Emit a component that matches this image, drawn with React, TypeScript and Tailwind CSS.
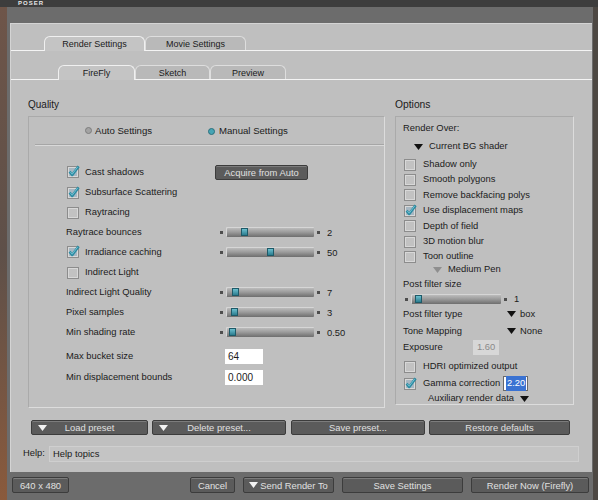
import React from 'react'

function Check({ on }: { on?: boolean }) {
  return (
    <svg width="12" height="12" viewBox="0 0 12 12" className="shrink-0 overflow-visible">
      <rect x="0.5" y="0.5" width="11" height="11" fill={on ? '#a7b7c2' : '#c2c2c2'} stroke="#8c8c8c" />
      <rect x="1.5" y="1.5" width="9" height="9" fill="none" stroke="#d8d8d8" />
      {on && (
        <>
          <path d="M2.6 5.6 L5.2 9 L11.6 0.4" fill="none" stroke="#2c8ba2" strokeWidth="2.6" strokeLinejoin="round" />
          <path d="M3.2 5.8 L5.2 8.2 L10.8 0.8" fill="none" stroke="#8fd6e4" strokeWidth="0.7" />
        </>
      )}
    </svg>
  )
}

function Radio({ on }: { on?: boolean }) {
  return (
    <span
      className={
        on
          ? 'h-[7px] w-[7px] shrink-0 rounded-full border border-[#2b6f7c] bg-[#46a5b5]'
          : 'h-[7px] w-[7px] shrink-0 rounded-full border border-[#7c7c7c] bg-[#a3a3a3]'
      }
    />
  )
}

function Tri({ grey, white }: { grey?: boolean; white?: boolean }) {
  return (
    <svg width="9" height="6" viewBox="0 0 9 6" className="shrink-0">
      <path d="M0 0 H9 L4.5 6 Z" fill={white ? '#f2f2f2' : grey ? '#8e8e8e' : '#111111'} />
    </svg>
  )
}

function Slider({ track, pos, value }: { track: string; pos: number; value?: string }) {
  return (
    <div className="flex items-center">
      <span className="h-[3px] w-[3px] bg-[#4d4d4d]" />
      <div
        className={`relative ml-[3px] h-[10px] rounded-[1px] bg-linear-to-b from-[#c4c4c4] via-[#9c9c9c] to-[#6e6e6e] shadow-[inset_1px_1px_0_#d6d6d6] ${track}`}
      >
        <span
          className="absolute top-[1px] h-[8px] w-[7px] border border-[#1e5a68] bg-linear-to-b from-[#6cc0cf] to-[#2a7d8f]"
          style={{ left: pos }}
        />
      </div>
      <span className="ml-[3px] h-[3px] w-[3px] bg-[#4d4d4d]" />
      {value && <span className="ml-[7px] pt-px">{value}</span>}
    </div>
  )
}

function Tab({ label, active, cls }: { label: string; active?: boolean; cls: string }) {
  return (
    <div
      className={
        active
          ? `relative z-10 -mb-px flex items-center justify-center rounded-t-[6px] border border-b-0 border-[#f0f0f0] bg-[#c4c4c4] pt-[2px] ${cls}`
          : `flex items-center justify-center rounded-t-[6px] border border-b-0 border-[#dedede] bg-[#b9b9b9] pt-[2px] ${cls}`
      }
    >
      {label}
    </div>
  )
}

function DarkButton({ children, cls }: { children: React.ReactNode; cls: string }) {
  return (
    <div
      className={`flex items-center justify-center rounded-[2px] border border-[#3c3c3c] bg-[#5b5b5b] pt-[2px] text-[#e0e0e0] shadow-[inset_0_1px_0_#7c7c7c] ${cls}`}
    >
      {children}
    </div>
  )
}

function Row({ children, h = 'h-[20px]' }: { children: React.ReactNode; h?: string }) {
  return <div className={`flex items-center pl-[37px] pt-px ${h}`}>{children}</div>
}

export default function App() {
  return (
    <div className="flex h-[500px] w-[598px] flex-col overflow-hidden bg-[#4d4843] font-['Liberation_Sans',Arial,sans-serif] text-[9.4px] text-[#1b1b1b]">
      <div className="flex h-[7px] shrink-0 items-center overflow-hidden bg-[#3d3d3d] pl-[18px]">
        <span className="text-[6px] font-bold leading-[7px] tracking-[1px] text-[#e8e8e8]">POSER</span>
      </div>
      <div className="flex flex-1">
        <div className="w-[7px] bg-linear-to-b from-[#6e5549] via-[#5e5049] to-[#8a5a3c]" />
        <div className="flex w-[586px] flex-col bg-[#6c6c6c] pt-[16px]">
          {/* main panel */}
          <div className="ml-[3px] flex h-[449px] w-[582px] flex-col border-t border-l border-[#d4d4d4] bg-[#bfbfbf]">
            <div className="flex h-[27px] items-end border-b border-[#f4f4f4] pl-[33px] text-[9px]">
              <Tab label="Render Settings" active cls="h-[15px] w-[101px]" />
              <Tab label="Movie Settings" cls="h-[14px] w-[101px]" />
            </div>
            <div className="flex h-[29px] items-end border-b border-[#f4f4f4] pl-[47px] text-[9px]">
              <Tab label="FireFly" active cls="h-[15px] w-[77px]" />
              <Tab label="Sketch" cls="h-[14px] w-[75px]" />
              <Tab label="Preview" cls="h-[14px] w-[76px]" />
            </div>

            <div className="flex">
              {/* Quality */}
              <div className="ml-[17px] w-[357px]">
                <div className="mt-[18px] h-[14px] text-[10px] leading-[14px]">Quality</div>
                <div className="mt-[4px] h-[292px] border border-t-[#aaaaaa] border-l-[#aaaaaa] border-r-[#dcdcdc] border-b-[#dcdcdc]">
                  <div className="flex h-[27px] items-center pl-[56px] pt-px text-[9.6px]">
                    <div className="flex w-[123px] items-center">
                      <Radio />
                      <span className="ml-[3px]">Auto Settings</span>
                    </div>
                    <Radio on />
                    <span className="ml-[4px]">Manual Settings</span>
                  </div>
                  <div className="ml-[6px] h-px bg-[#a6a6a6]" />
                  <div className="ml-[6px] h-px bg-[#d9d9d9]" />
                  <div className="mt-[16px]">
                    <Row>
                      <div className="flex w-[149px] items-center">
                        <span className="ml-px"><Check on /></span>
                        <span className="ml-[6px]">Cast shadows</span>
                      </div>
                      <DarkButton cls="h-[15px] w-[93px]">Acquire from Auto</DarkButton>
                    </Row>
                    <Row>
                      <span className="ml-px"><Check on /></span>
                      <span className="ml-[6px]">Subsurface Scattering</span>
                    </Row>
                    <Row>
                      <span className="ml-px"><Check /></span>
                      <span className="ml-[6px]">Raytracing</span>
                    </Row>
                    <Row>
                      <span className="w-[154px]">Raytrace bounces</span>
                      <Slider track="w-[88px]" pos={15} value="2" />
                    </Row>
                    <Row>
                      <div className="flex w-[154px] items-center">
                        <span className="ml-px"><Check on /></span>
                        <span className="ml-[6px]">Irradiance caching</span>
                      </div>
                      <Slider track="w-[88px]" pos={41} value="50" />
                    </Row>
                    <Row>
                      <span className="ml-px"><Check /></span>
                      <span className="ml-[6px]">Indirect Light</span>
                    </Row>
                    <Row>
                      <span className="w-[154px]">Indirect Light Quality</span>
                      <Slider track="w-[88px]" pos={6} value="7" />
                    </Row>
                    <Row>
                      <span className="w-[154px]">Pixel samples</span>
                      <Slider track="w-[88px]" pos={5} value="3" />
                    </Row>
                    <Row>
                      <span className="w-[154px]">Min shading rate</span>
                      <Slider track="w-[88px]" pos={3} value="0.50" />
                    </Row>
                    <div className="mt-[3px]">
                      <Row h="h-[21px]">
                        <span className="w-[159px]">Max bucket size</span>
                        <div className="flex h-[15px] w-[38px] items-center bg-white pl-[3px] text-[10px]">64</div>
                      </Row>
                      <Row h="h-[21px]">
                        <span className="w-[159px]">Min displacement bounds</span>
                        <div className="flex h-[15px] w-[38px] items-center bg-white pl-[3px] text-[10px]">0.000</div>
                      </Row>
                    </div>
                  </div>
                </div>
              </div>

              {/* Options */}
              <div className="ml-[10px] w-[179px]">
                <div className="mt-[18px] h-[14px] text-[10.3px] leading-[14px]">Options</div>
                <div className="mt-[4px] h-[289px] border border-t-[#aaaaaa] border-l-[#aaaaaa] border-r-[#dcdcdc] border-b-[#dcdcdc] pl-[7px] pt-[4px]">
                  <div className="flex h-[15px] items-center">Render Over:</div>
                  <div className="flex h-[21px] items-center pl-[11px]">
                    <Tri />
                    <span className="ml-[6px]">Current BG shader</span>
                  </div>
                  {[
                    ['Shadow only', false, 'h-[15px]'],
                    ['Smooth polygons', false, 'h-[15px]'],
                    ['Remove backfacing polys', false, 'h-[16px]'],
                    ['Use displacement maps', true, 'h-[15px]'],
                    ['Depth of field', false, 'h-[16px]'],
                    ['3D motion blur', false, 'h-[15px]'],
                    ['Toon outline', false, 'h-[15px]'],
                  ].map(([label, on, h]) => (
                    <div key={label as string} className={`flex items-center pl-px ${h}`}>
                      <Check on={on as boolean} />
                      <span className="ml-[7px]">{label as string}</span>
                    </div>
                  ))}
                  <div className="flex h-[11px] items-center pl-[30px]">
                    <Tri grey />
                    <span className="ml-[6px]">Medium Pen</span>
                  </div>
                  <div className="flex h-[18px] items-center pt-px">Post filter size</div>
                  <div className="flex h-[12px] items-center pl-[2px]">
                    <Slider track="w-[90px]" pos={4} value="1" />
                  </div>
                  <div className="flex h-[18px] items-center">
                    <span className="w-[104px]">Post filter type</span>
                    <Tri />
                    <span className="ml-[4px]">box</span>
                  </div>
                  <div className="flex h-[16px] items-center">
                    <span className="w-[104px]">Tone Mapping</span>
                    <Tri />
                    <span className="ml-[4px]">None</span>
                  </div>
                  <div className="flex h-[17px] items-center">
                    <span className="w-[70px]">Exposure</span>
                    <div className="flex h-[15px] w-[26px] items-center justify-center bg-[#d7d7d7] text-[#8a8a8a]">1.60</div>
                  </div>
                  <div className="flex h-[21px] items-center pl-px">
                    <Check />
                    <span className="ml-[7px]">HDRI optimized output</span>
                  </div>
                  <div className="flex h-[13px] items-center pl-px">
                    <Check on />
                    <span className="ml-[7px] w-[80px]">Gamma correction</span>
                    <div className="flex h-[15px] w-[25px] items-center border border-[#6a6a6a] bg-white pl-[2px]">
                      <span className="bg-[#3a72d2] px-px text-white">2.20</span>
                    </div>
                  </div>
                  <div className="flex h-[17px] items-center pl-[25px]">
                    <span>Auxiliary render data</span>
                    <span className="ml-[6px]"><Tri /></span>
                  </div>
                </div>
              </div>
            </div>

            <div className="mt-[12px] flex pl-[20px]">
              <DarkButton cls="relative h-[15px] w-[117px]">
                <span className="absolute left-[6px] top-[4px]"><Tri white /></span>
                Load preset
              </DarkButton>
              <DarkButton cls="relative ml-[4px] h-[15px] w-[134px]">
                <span className="absolute left-[6px] top-[4px]"><Tri white /></span>
                Delete preset...
              </DarkButton>
              <DarkButton cls="ml-[5px] h-[15px] w-[134px]">Save preset...</DarkButton>
              <DarkButton cls="ml-[4px] h-[15px] w-[141px]">Restore defaults</DarkButton>
            </div>

            <div className="mt-[10px] flex h-[16px] items-center pl-[12px] pt-px">
              <span className="w-[26px]">Help:</span>
              <div className="flex h-[16px] w-[530px] items-center border border-[#cfcfcf] bg-[#c4c4c4] pl-[3px] pt-px">Help topics</div>
            </div>
          </div>

          {/* bottom bar */}
          <div className="flex pl-[5px] pt-[5px]">
            <DarkButton cls="h-[16px] w-[57px]">640 x 480</DarkButton>
            <DarkButton cls="ml-[121px] h-[16px] w-[45px]">Cancel</DarkButton>
            <DarkButton cls="ml-[8px] h-[16px] w-[91px]">
              <span className="mr-[2px] -mt-[3px]"><Tri white /></span>
              Send Render To
            </DarkButton>
            <DarkButton cls="ml-[8px] h-[16px] w-[121px]">Save Settings</DarkButton>
            <DarkButton cls="ml-[8px] h-[16px] w-[118px]">Render Now (Firefly)</DarkButton>
          </div>
        </div>
        <div className="flex-1 bg-[#4d4843]" />
      </div>
    </div>
  )
}
